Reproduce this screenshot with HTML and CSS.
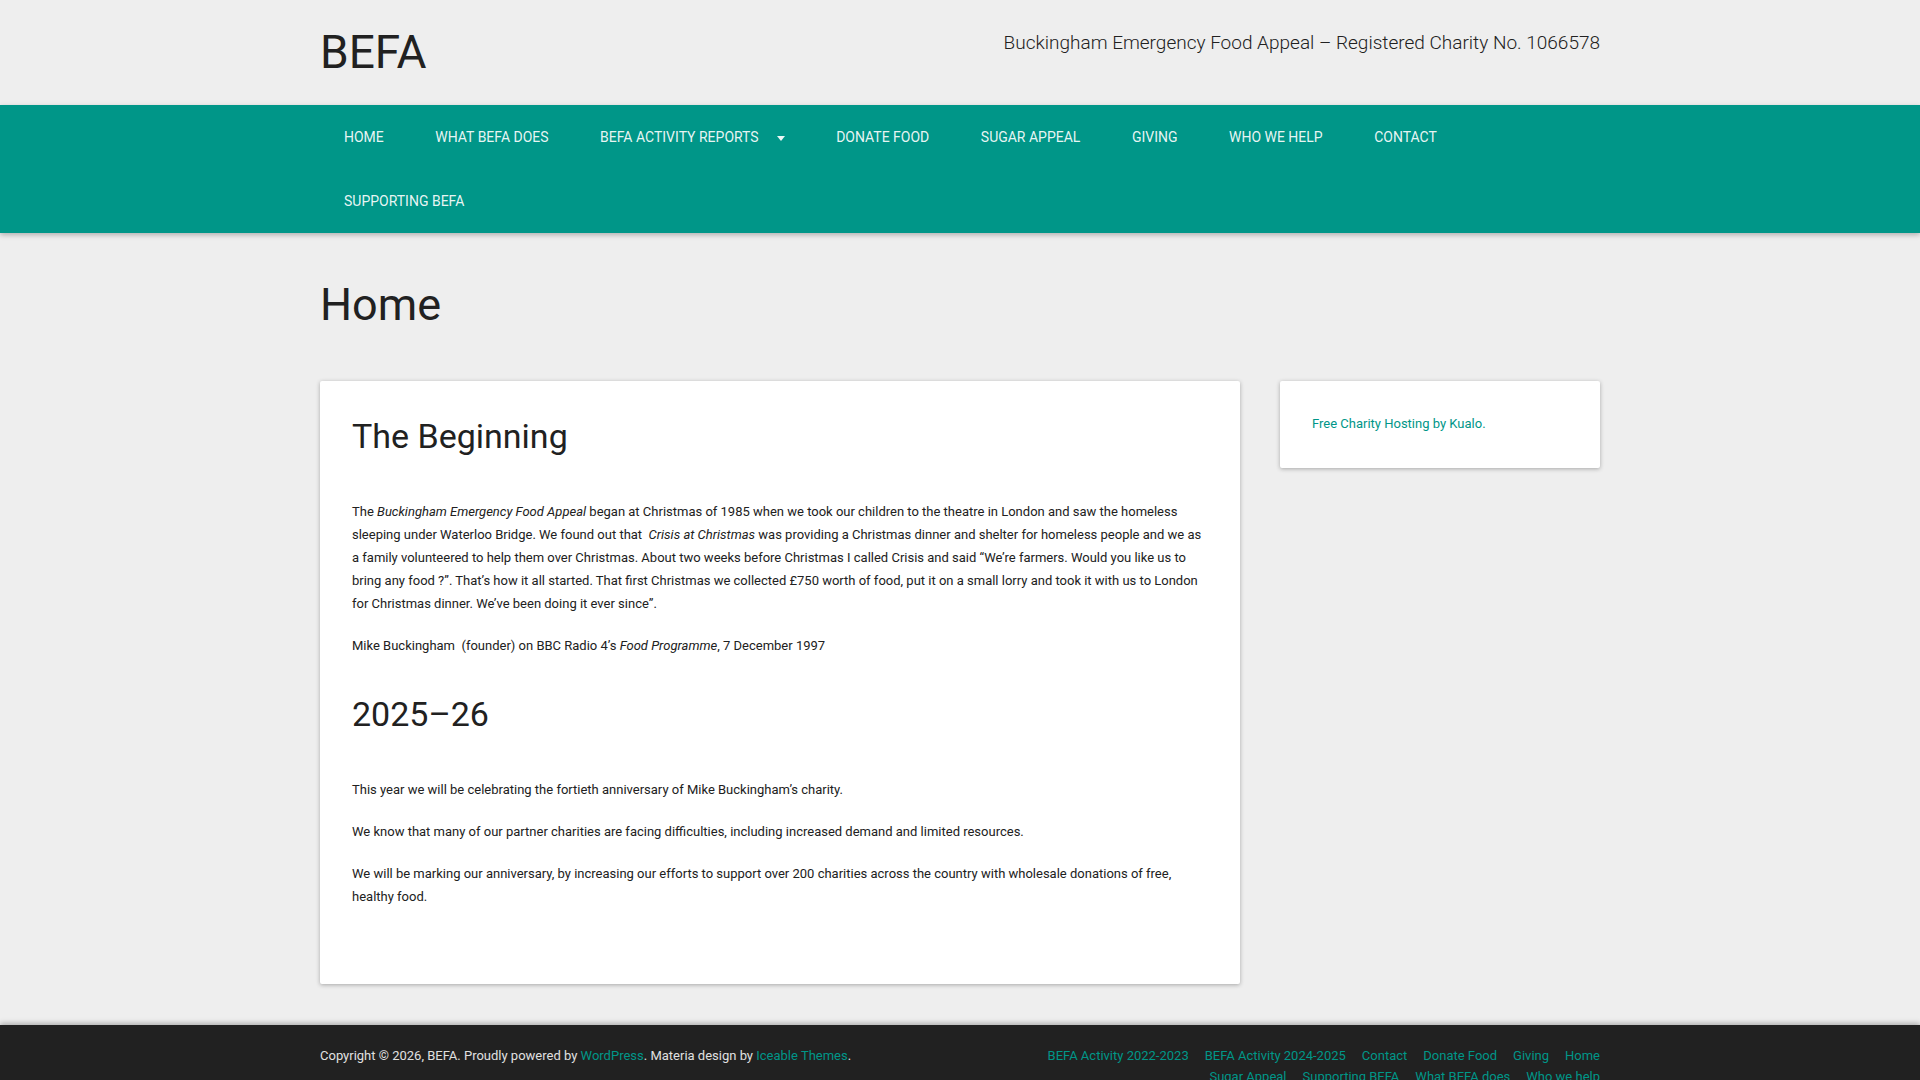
FILE: index.html
```html
<!DOCTYPE html>
<html lang="en-GB">
<head>
    <meta charset="UTF-8">
    <meta name="viewport" content="width=device-width, initial-scale=1.0">
    <title>Home – BEFA</title>
    <link rel="stylesheet" href="styles.css">
</head>
<body>

<header class="site-header">
    <div class="container header-inner">
        <a class="site-title" href="#">BEFA</a>
        <p class="site-description">Buckingham Emergency Food Appeal – Registered Charity No. 1066578</p>
    </div>
</header>

<nav class="main-nav">
    <div class="container">
        <ul class="menu">
            <li><a href="#">Home</a></li>
            <li><a href="#">What BEFA does</a></li>
            <li class="has-children"><a href="#">BEFA Activity Reports<span class="caret"></span></a></li>
            <li><a href="#">Donate Food</a></li>
            <li><a href="#">Sugar Appeal</a></li>
            <li><a href="#">Giving</a></li>
            <li><a href="#">Who we help</a></li>
            <li><a href="#">Contact</a></li>
            <li><a href="#">Supporting BEFA</a></li>
        </ul>
    </div>
</nav>

<div class="container">
    <h1 class="page-title">Home</h1>

    <div class="content-area">
        <article class="card entry">
            <h2>The Beginning</h2>
            <p>The <em>Buckingham Emergency Food Appeal</em> began at Christmas of 1985 when we took our children to the theatre in London and saw the homeless sleeping under Waterloo Bridge. We found out that&nbsp; <em>Crisis at Christmas</em> was providing a Christmas dinner and shelter for homeless people and we as a family volunteered to help them over Christmas. About two weeks before Christmas I called Crisis and said “We’re farmers. Would you like us to bring any food ?”. That’s how it all started. That first Christmas we collected £750 worth of food, put it on a small lorry and took it with us to London for Christmas dinner. We’ve been doing it ever since”.</p>
            <p>Mike Buckingham&nbsp; (founder) on BBC Radio 4’s <em>Food Programme</em>, 7 December 1997</p>

            <h2>2025–26</h2>
            <p>This year we will be celebrating the fortieth anniversary of Mike Buckingham’s charity.</p>
            <p>We know that many of our partner charities are facing difficulties, including increased demand and limited resources.</p>
            <p>We will be marking our anniversary, by increasing our efforts to support over 200 charities across the country with wholesale donations of free, healthy food.</p>
        </article>

        <aside class="sidebar">
            <div class="card widget">
                <a href="#">Free Charity Hosting by Kualo.</a>
            </div>
        </aside>
    </div>
</div>

<footer class="site-footer">
    <div class="container footer-inner">
        <p class="credits">Copyright © 2026, BEFA. Proudly powered by <a href="#">WordPress</a>. Materia design by <a href="#">Iceable Themes</a>.</p>
        <ul class="footer-menu">
            <li><a href="#">BEFA Activity 2022-2023</a></li>
            <li><a href="#">BEFA Activity 2024-2025</a></li>
            <li><a href="#">Contact</a></li>
            <li><a href="#">Donate Food</a></li>
            <li><a href="#">Giving</a></li>
            <li><a href="#">Home</a></li>
            <li><a href="#">Sugar Appeal</a></li>
            <li><a href="#">Supporting BEFA</a></li>
            <li><a href="#">What BEFA does</a></li>
            <li><a href="#">Who we help</a></li>
        </ul>
    </div>
</footer>

</body>
</html>
```

FILE: styles.css
```css
* {
    box-sizing: border-box;
}
body {
    margin: 0;
    background-color: #eeeeee;
    color: #212121;
    font-family: Roboto, "Liberation Sans", sans-serif;
    font-size: 13px;
    line-height: 23px;
}
a {
    color: #009688;
    text-decoration: none;
}
ul {
    list-style: none;
    margin: 0;
    padding: 0;
}
.container {
    width: 1280px;
    margin: 0 auto;
}

/* header */
.header-inner {
    display: flex;
    justify-content: space-between;
    align-items: flex-start;
    padding: 30px 0;
}
.site-title {
    color: #212121;
    font-size: 46px;
    line-height: 45px;
}
.site-description {
    margin: 0;
    font-size: 19px;
    font-weight: 300;
    line-height: 26px;
    color: #212121;
}

/* main navigation */
.main-nav {
    background-color: #009688;
    box-shadow: 0 2px 5px rgba(0, 0, 0, 0.26);
    position: relative;
}
.menu {
    display: flex;
    flex-wrap: wrap;
    margin-left: -1.75px;
}
.menu a {
    display: block;
    padding: 0 25.75px;
    line-height: 64px;
    color: rgba(255, 255, 255, 0.92);
    text-transform: uppercase;
    font-size: 14px;
}
.caret {
    display: inline-block;
    margin-left: 18px;
    vertical-align: middle;
    border-left: 4px solid transparent;
    border-right: 4px solid transparent;
    border-top: 5px solid rgba(255, 255, 255, 0.92);
}

/* page */
.page-title {
    margin: 47px 0 51px;
    font-size: 45px;
    font-weight: 400;
    line-height: 1.1;
}
.content-area {
    display: grid;
    grid-template-columns: 920px 320px;
    gap: 40px;
    align-items: start;
}
.card {
    background-color: #fff;
    border-radius: 2px;
    box-shadow: 0 1px 4px rgba(0, 0, 0, 0.3);
}
.entry {
    padding: 30px 32px 57px;
}
.entry h2 {
    margin: 32px 0 38px;
    font-size: 34px;
    font-weight: 400;
    line-height: 1.5;
}
.entry h2:first-child {
    margin-top: 0;
}
.entry p {
    margin: 0 0 19px;
}
.widget {
    padding: 31px 32px 33px;
}

/* footer */
.site-footer {
    margin-top: 41px;
    background-color: #212121;
    box-shadow: 0 -2px 5px rgba(0, 0, 0, 0.26);
    font-size: 13px;
    line-height: 21px;
    color: #e0e0e0;
}
.footer-inner {
    display: flex;
    padding: 20px 0;
}
.credits {
    width: 50%;
    margin: 0;
}
.footer-menu {
    width: 50%;
    display: flex;
    flex-wrap: wrap;
    justify-content: flex-end;
    column-gap: 16px;
}
```
